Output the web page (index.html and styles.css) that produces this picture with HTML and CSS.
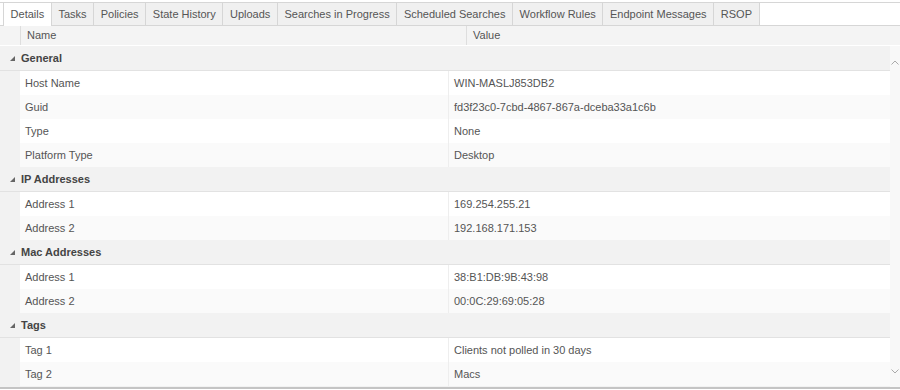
FILE: index.html
```html
<!DOCTYPE html>
<html>
<head>
    <meta charset="UTF-8">
    <title>Endpoint Details</title>
    <link rel="stylesheet" href="styles.css">
</head>
<body>
    <div id="panel">
        <ul class="tabs">
            <li class="tab active">Details</li>
            <li class="tab">Tasks</li>
            <li class="tab">Policies</li>
            <li class="tab">State History</li>
            <li class="tab">Uploads</li>
            <li class="tab">Searches in Progress</li>
            <li class="tab">Scheduled Searches</li>
            <li class="tab">Workflow Rules</li>
            <li class="tab">Endpoint Messages</li>
            <li class="tab">RSOP</li>
        </ul>

        <div class="grid-header">
            <div class="hcell hcell-expander"></div>
            <div class="hcell hcell-name">Name</div>
            <div class="hcell hcell-value">Value</div>
        </div>

        <div class="grid-frame">
            <div class="grid-body">
                <div class="group">
                    <div class="group-title"><svg class="caret" width="5" height="5" viewBox="0 0 5 5"><polygon points="5,0 5,5 0,5" fill="#666"/></svg>General</div>
                    <div class="row"><div class="cell name">Host Name</div><div class="cell value">WIN-MASLJ853DB2</div></div>
                    <div class="row alt"><div class="cell name">Guid</div><div class="cell value">fd3f23c0-7cbd-4867-867a-dceba33a1c6b</div></div>
                    <div class="row"><div class="cell name">Type</div><div class="cell value">None</div></div>
                    <div class="row alt"><div class="cell name">Platform Type</div><div class="cell value">Desktop</div></div>
                </div>

                <div class="group">
                    <div class="group-title"><svg class="caret" width="5" height="5" viewBox="0 0 5 5"><polygon points="5,0 5,5 0,5" fill="#666"/></svg>IP Addresses</div>
                    <div class="row"><div class="cell name">Address 1</div><div class="cell value">169.254.255.21</div></div>
                    <div class="row alt"><div class="cell name">Address 2</div><div class="cell value">192.168.171.153</div></div>
                </div>

                <div class="group">
                    <div class="group-title"><svg class="caret" width="5" height="5" viewBox="0 0 5 5"><polygon points="5,0 5,5 0,5" fill="#666"/></svg>Mac Addresses</div>
                    <div class="row"><div class="cell name">Address 1</div><div class="cell value">38:B1:DB:9B:43:98</div></div>
                    <div class="row alt"><div class="cell name">Address 2</div><div class="cell value">00:0C:29:69:05:28</div></div>
                </div>

                <div class="group">
                    <div class="group-title"><svg class="caret" width="5" height="5" viewBox="0 0 5 5"><polygon points="5,0 5,5 0,5" fill="#666"/></svg>Tags</div>
                    <div class="row"><div class="cell name">Tag 1</div><div class="cell value">Clients not polled in 30 days</div></div>
                    <div class="row alt"><div class="cell name">Tag 2</div><div class="cell value">Macs</div></div>
                </div>
            </div>

            <div class="scrollbar">
                <svg width="8" height="5" viewBox="0 0 8 5"><polyline points="0.5,4.5 4,1 7.5,4.5" fill="none" stroke="#aaa" stroke-width="1"/></svg>
                <svg width="8" height="5" viewBox="0 0 8 5"><polyline points="0.5,0.5 4,4 7.5,0.5" fill="none" stroke="#aaa" stroke-width="1"/></svg>
            </div>
        </div>
    </div>
</body>
</html>
```

FILE: styles.css
```css
body {
    margin: 0;
    padding: 0;
    background-color: #fff;
    font-family: "Liberation Sans", Arial, sans-serif;
    font-size: 11px;
    color: #555;
}

#panel {
    width: 900px;
    height: 389px;
    padding-top: 2px;
    box-sizing: border-box;
    display: flex;
    flex-direction: column;
    border-bottom: 2px solid #c4c4c4;
}

.tabs {
    list-style: none;
    margin: 0;
    padding: 0 0 0 3px;
    display: flex;
    height: 22px;
    border-top: 1px solid #d6d6d6;
    border-bottom: 1px solid #d6d6d6;
    background-color: #fff;
}

.tab {
    padding: 0 6.6px;
    line-height: 22px;
    background-color: #f0f0f0;
    border-right: 1px solid #d6d6d6;
    color: #555;
    white-space: nowrap;
}

.tab:first-child {
    border-left: 1px solid #d6d6d6;
}

.tab.active {
    background-color: #fff;
    height: 23px;
}

.grid-header {
    display: flex;
    height: 19px;
    background-color: #f4f4f4;
    border-bottom: 1px solid #fff;
    line-height: 19px;
}

.hcell {
    border-left: 1px solid #dedede;
    padding-left: 6px;
    color: #555;
}

.hcell-expander {
    width: 20px;
    border-left: none;
    padding: 0;
}

.hcell-name {
    width: 439px;
}

.hcell-value {
    flex: 1;
}

.grid-frame {
    flex: 1;
    display: flex;
    overflow: hidden;
    background-color: #f2f2f2;
}

.grid-body {
    flex: 1;
    overflow: hidden;
}

.group {
    margin-top: 1px;
}

.group-title {
    height: 23px;
    line-height: 23px;
    font-weight: bold;
    color: #444;
    padding-left: 21px;
    position: relative;
    border-bottom: 1px solid #e2e2e2;
    background-color: #f2f2f2;
}

.caret {
    position: absolute;
    left: 10px;
    top: 9px;
}

.row {
    display: flex;
    margin-left: 20px;
    height: 24px;
    line-height: 24px;
    background-color: #fff;
}

.row.alt {
    background-color: #fafafa;
}

.cell.name {
    width: 423px;
    padding-left: 5px;
    border-right: 1px solid #eeeeee;
}

.cell.value {
    flex: 1;
    padding-left: 5px;
}

.scrollbar {
    width: 10px;
    background-color: #f8f8f8;
    display: flex;
    flex-direction: column;
    justify-content: space-between;
    align-items: center;
    padding: 14px 0 13px 0;
}
```
